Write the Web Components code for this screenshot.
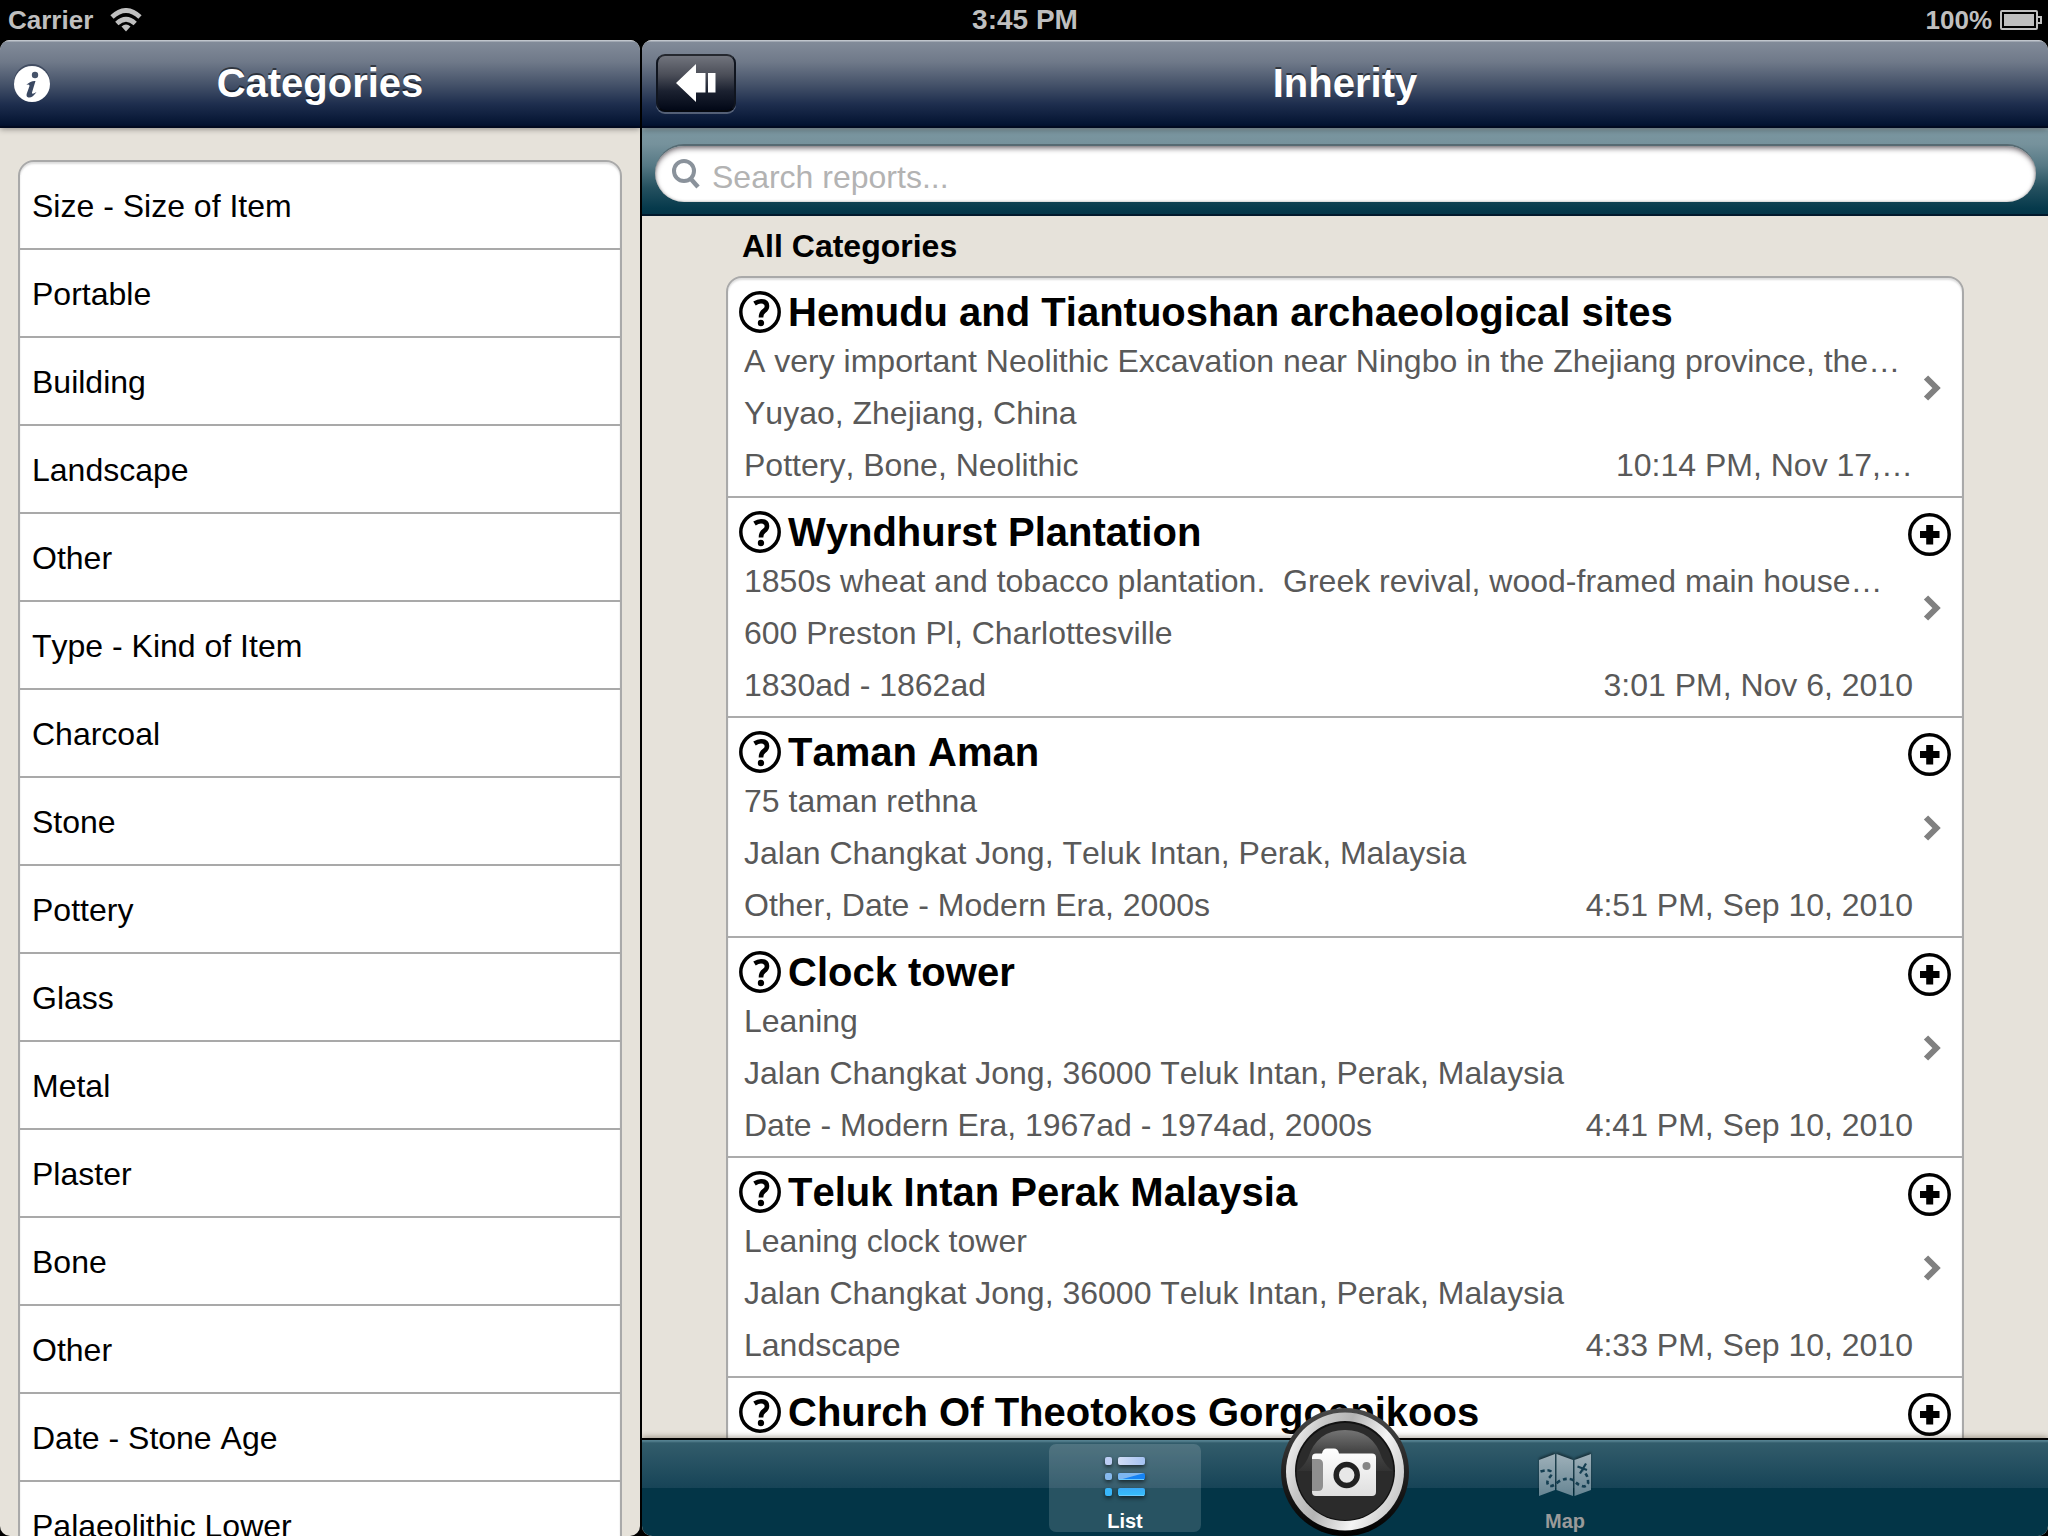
<!DOCTYPE html>
<html lang="en">
<head>
<meta charset="utf-8">
<meta name="viewport" content="width=device-width, initial-scale=1">
<title>Inherity</title>
<style>
  html, body { margin: 0; height: 100%; background: #000; }
  body { font-family: "Liberation Sans", Arial, sans-serif; font-kerning: none; overflow: hidden; }
</style>
</head>
<body>
<inherity-app>
  <status-bar slot="status">
    <span slot="carrier">Carrier</span>
    <span slot="time">3:45 PM</span>
    <span slot="battery">100%</span>
  </status-bar>

  <split-pane slot="master">
    <nav-bar slot="top"><info-button slot="left"></info-button>Categories</nav-bar>
    <category-list></category-list>
  </split-pane>

  <split-pane slot="detail">
    <nav-bar slot="top"><back-button slot="left"></back-button>Inherity</nav-bar>
    <search-bar slot="top"></search-bar>
    <report-list heading="All Categories">
      <report-item>
        Hemudu and Tiantuoshan archaeological sites
        <span slot="summary">A very important Neolithic Excavation near Ningbo in the Zhejiang province, the…</span>
        <span slot="place">Yuyao, Zhejiang, China</span>
        <span slot="tags">Pottery, Bone, Neolithic</span>
        <span slot="date">10:14 PM, Nov 17,…</span>
      </report-item>
      <report-item addable>
        Wyndhurst Plantation
        <span slot="summary">1850s wheat and tobacco plantation.&nbsp; Greek revival, wood-framed main house…</span>
        <span slot="place">600 Preston Pl, Charlottesville</span>
        <span slot="tags">1830ad - 1862ad</span>
        <span slot="date">3:01 PM, Nov 6, 2010</span>
      </report-item>
      <report-item addable>
        Taman Aman
        <span slot="summary">75 taman rethna</span>
        <span slot="place">Jalan Changkat Jong, Teluk Intan, Perak, Malaysia</span>
        <span slot="tags">Other, Date - Modern Era, 2000s</span>
        <span slot="date">4:51 PM, Sep 10, 2010</span>
      </report-item>
      <report-item addable>
        Clock tower
        <span slot="summary">Leaning</span>
        <span slot="place">Jalan Changkat Jong, 36000 Teluk Intan, Perak, Malaysia</span>
        <span slot="tags">Date - Modern Era, 1967ad - 1974ad, 2000s</span>
        <span slot="date">4:41 PM, Sep 10, 2010</span>
      </report-item>
      <report-item addable>
        Teluk Intan Perak Malaysia
        <span slot="summary">Leaning clock tower</span>
        <span slot="place">Jalan Changkat Jong, 36000 Teluk Intan, Perak, Malaysia</span>
        <span slot="tags">Landscape</span>
        <span slot="date">4:33 PM, Sep 10, 2010</span>
      </report-item>
      <report-item addable>
        Church Of Theotokos Gorgoepikoos
      </report-item>
    </report-list>
    <tab-bar slot="bottom">
      <tab-item selected>
        <svg slot="icon" width="52" height="52" viewBox="0 0 52 52" aria-hidden="true">
          <defs>
            <linearGradient id="top" x1="0" y1="0" x2="1" y2="0"><stop offset="0" stop-color="#d3def6"/><stop offset="1" stop-color="#a4c2f2"/></linearGradient>
            <linearGradient id="low" x1="0" y1="0" x2="0" y2="1"><stop offset="0" stop-color="#3aa9f6"/><stop offset="1" stop-color="#35c0fb"/></linearGradient>
          </defs>
          <g>
            <rect x="6" y="7" width="7" height="8" rx="2" fill="#bccdf3"/>
            <rect x="19" y="7" width="27" height="8" rx="2" fill="url(#top)"/>
            <rect x="6" y="23" width="7" height="7" rx="2" fill="#86b9ee"/>
            <rect x="19" y="23" width="27" height="7" rx="2" fill="#1583f3"/>
            <path d="M21 23h24.500L20 30q-1-1-1-2v-3q0-2 2-2z" fill="#7db6f0"/>
            <rect x="6" y="38" width="7" height="8" rx="2" fill="#38b6fa"/>
            <rect x="19" y="38" width="27" height="8" rx="2" fill="url(#low)"/>
            <path d="M20 45.500h25M20 29.500h25" stroke="#6ccbff" stroke-width="1"/>
          </g>
        </svg>
        List
      </tab-item>
      <camera-button></camera-button>
      <tab-item>
        <svg slot="icon" width="52" height="52" viewBox="0 0 52 52" aria-hidden="true">
          <defs><linearGradient id="paper" x1="0" y1="0" x2="0" y2="1"><stop offset="0" stop-color="#9eb0b9"/><stop offset="1" stop-color="#668593"/></linearGradient></defs>
          <path d="M0 10L16 4V40L0 46zM17.500 4L34 10V46L17.500 40zM35.500 10L52 4V40L35.500 46z" fill="url(#paper)"/>
          <path d="M1.500 21.500Q9 19 12 21.500Q14 24 10 28Q7 32 9.500 35.500Q13 37.500 19 32Q27 27 34 30Q40 36 45 36.500Q50 35 49 31Q49 25 44 21" fill="none" stroke="#153f52" stroke-width="2.600" stroke-dasharray="4 3"/>
          <path d="M38.500 16.500L48 20M47 13.500L41 23.500" stroke="#153f52" stroke-width="2.200"/>
        </svg>
        Map
      </tab-item>
    </tab-bar>
  </split-pane>
</inherity-app>

<script>
  // Registers an element whose shadow root is cloned from a template string.
  function component(name, markup, setup) {
    const template = document.createElement('template');
    template.innerHTML = markup;
    customElements.define(name, class extends HTMLElement {
      constructor() {
        super();
        this.attachShadow({ mode: 'open' }).append(template.content.cloneNode(true));
      }
      connectedCallback() { if (setup) setup(this, this.shadowRoot); }
    });
  }

  component('inherity-app', `
    <style>
      :host { display: flex; flex-direction: column; height: 100vh; background: #000; }
      main { flex: 1; min-height: 0; display: grid; grid-template-columns: 640px minmax(0, 1fr); gap: 2px; }
      ::slotted(split-pane) { min-height: 0; }
    </style>
    <slot name="status"></slot>
    <main><slot name="master"></slot><slot name="detail"></slot></main>`);

  component('status-bar', `
    <style>
      :host { display: grid; grid-template-columns: 1fr auto 1fr; align-items: center; height: 40px; padding: 0 6px 0 8px;
              color: #bfbfbf; font-size: 26px; font-weight: bold; line-height: 40px; }
      .left, .right { display: flex; align-items: center; }
      .left { gap: 17px; }
      .right { justify-content: flex-end; gap: 8px; }
      .time { font-size: 28px; }
    </style>
    <div class="left"><slot name="carrier"></slot>
      <svg width="32" height="24" viewBox="0 0 32 24" aria-hidden="true">
        <g fill="none" stroke="#bfbfbf" stroke-width="4.800"><path d="M2 9Q16 -4 30 9"/><path d="M6.800 15.500Q16 7 25.200 15.500"/></g>
        <path d="M11.500 18.500Q16 14.500 20.500 18.500L16 23.500z" fill="#bfbfbf"/>
      </svg></div>
    <div class="time"><slot name="time"></slot></div>
    <div class="right"><slot name="battery"></slot>
      <svg width="42" height="20" viewBox="0 0 42 20" aria-hidden="true">
        <rect x="1" y="1" width="36" height="18" rx="1" fill="none" stroke="#bfbfbf" stroke-width="2"/>
        <rect x="4" y="4" width="30" height="12" fill="#bfbfbf"/>
        <path d="M38 7h3v6h-3" fill="none" stroke="#bfbfbf" stroke-width="2"/>
      </svg></div>`);

  component('split-pane', `
    <style>
      :host { display: flex; flex-direction: column; border-radius: 10px; overflow: hidden; background: #e6e2da; }
      .content { flex: 1; min-height: 0; overflow: hidden; }
    </style>
    <slot name="top"></slot>
    <div class="content"><slot></slot></div>
    <slot name="bottom"></slot>`);

  component('nav-bar', `
    <style>
      :host { position: relative; z-index: 1; display: grid; grid-template-columns: 1fr auto 1fr; align-items: center;
              height: 88px; box-sizing: border-box; padding: 0 14px 2px; flex: none;
              background: linear-gradient(#c0c5cc 0 1px, #828b99 2px, #6f7989 22px, #46536a 44px, #1e2e4e 64px, #041432 84px, #03102d 86px, #010a20 86px);
              box-shadow: 0 1px 6px rgba(0, 0, 0, .4); }
      h1 { margin: 0; color: #fff; font-size: 40px; line-height: 48px; text-shadow: 0 -2px 0 rgba(0, 0, 0, .5); }
      .left { display: flex; }
    </style>
    <div class="left"><slot name="left"></slot></div>
    <h1><slot></slot></h1>`);

  component('info-button', `
    <style>
      :host { display: block; }
      button { display: block; padding: 0; border: 0; background: none; border-radius: 50%; }
      svg { display: block; }
    </style>
    <button type="button" aria-label="About">
      <svg width="36" height="38" viewBox="0 0 36 38" aria-hidden="true">
        <circle cx="18" cy="18" r="18" fill="#1c2740" opacity=".5"/>
        <circle cx="18" cy="20" r="18" fill="#fff"/>
        <circle cx="21" cy="11" r="3.200" fill="#46536a"/>
        <path d="M12.300 20.800Q17 16.500 21.500 17L18 28.500Q17.500 31 22.500 28Q18.500 34 14.500 33.500Q11.800 33 12.800 29.500L15.500 22Q15.800 19.800 12.300 20.800z" fill="#3a4862"/>
      </svg>
    </button>`);

  component('back-button', `
    <style>
      :host { display: block; }
      button { display: flex; align-items: center; justify-content: center; width: 80px; height: 58px; padding: 0;
               border: 2px solid; border-color: #25282f #10151f #05080f; border-radius: 9px;
               background: linear-gradient(#71747d, #4b4e58 35%, #1b2130 65%, #020817);
               box-shadow: 0 2px 0 rgba(255, 255, 255, .28); }
    </style>
    <button type="button" aria-label="Back">
      <svg width="40" height="38" viewBox="0 0 40 38" aria-hidden="true">
        <path d="M0 19L20 0V9H29.500V28.500H20V38zM32 9H39.500V28.500H32z" fill="#fff"/>
      </svg>
    </button>`);

  component('category-list', `
    <style>
      :host { display: block; padding: 32px 18px 0; }
      ul { list-style: none; margin: 0; padding: 0; border: 2px solid #a9a9a9; border-radius: 16px 16px 0 0; overflow: hidden;
           background: #fff; box-shadow: inset 0 2px 2px #ddd; }
      li { border-bottom: 2px solid #a9a9a9; }
      button { display: block; width: 100%; height: 86px; padding: 2px 12px 0; border: 0; background: none; color: #000;
               font: 32px/40px "Liberation Sans", Arial, sans-serif; font-kerning: none; text-align: left; }
    </style>
    <nav aria-label="Categories"><ul></ul></nav>`, (host, root) => {
    const names = ['Size - Size of Item', 'Portable', 'Building', 'Landscape', 'Other', 'Type - Kind of Item', 'Charcoal',
      'Stone', 'Pottery', 'Glass', 'Metal', 'Plaster', 'Bone', 'Other', 'Date - Stone Age', 'Palaeolithic Lower'];
    root.querySelector('ul').replaceChildren(...names.map(name => {
      const item = document.createElement('li');
      const button = document.createElement('button');
      button.type = 'button';
      button.textContent = name;
      item.append(button);
      return item;
    }));
  });

  component('search-bar', `
    <style>
      :host { display: block; flex: none; height: 88px; box-sizing: border-box; padding: 16px 12px 14px 13px;
              background: linear-gradient(#8fa3aa 0 1px, #7b96a0 3px, #76929c 16px, #557884 38px, #24505f 60px, #063a4c 80px, #043548 86px, #02192c 86px); }
      label { display: flex; align-items: center; height: 58px; box-sizing: border-box; padding: 0 17px; gap: 12px;
              border-radius: 29px; background: #fff; border-top: 2px solid #566a72;
              box-shadow: inset 0 3px 5px rgba(40, 30, 40, .5), inset 0 0 3px rgba(0, 0, 0, .3); }
      input { flex: 1; min-width: 0; height: 56px; box-sizing: border-box; padding: 6px 0 0; border: 0; outline: 0; background: none;
              font: 32px/40px "Liberation Sans", Arial, sans-serif; font-kerning: none; color: #000; }
      input::placeholder { color: #b3b3b3; opacity: 1; }
    </style>
    <label>
      <svg width="28" height="30" viewBox="0 0 28 30" aria-hidden="true">
        <circle cx="12" cy="12" r="10" fill="none" stroke="#8a929b" stroke-width="4"/>
        <path d="M18 19L26 28" stroke="#8a929b" stroke-width="4.500"/>
      </svg>
      <input type="search" placeholder="Search reports..." aria-label="Search reports">
    </label>`);

  component('report-list', `
    <style>
      :host { display: block; padding: 0 84px; }
      h2 { margin: 0; padding: 0 16px; font-size: 32px; line-height: 60px; color: #000; }
      .card { border: 2px solid #a9a9a9; border-radius: 16px 16px 0 0; background: #fff; overflow: hidden; box-shadow: inset 0 2px 2px #ddd; }
    </style>
    <h2></h2>
    <div class="card"><slot></slot></div>`, (host, root) => {
    root.querySelector('h2').textContent = host.getAttribute('heading');
  });

  component('report-item', `
    <style>
      :host { display: grid; grid-template-columns: minmax(0, 1fr) 38px; padding: 9px 11px 7px; border-bottom: 2px solid #ababab;
              color: #595959; font-size: 32px; line-height: 48px; white-space: nowrap; }
      h3 { display: flex; align-items: center; gap: 7px; margin: 0; font-size: 40px; line-height: 50px; color: #000; }
      h3 svg { flex: none; }
      a { color: inherit; text-decoration: none; }
      .lines { display: grid; gap: 4px; padding-left: 5px; }
      .lines > div { min-height: 48px; overflow: hidden; text-overflow: ellipsis; }
      .lines > .last { display: flex; justify-content: space-between; gap: 20px; }
      .side { display: grid; grid-template-columns: 38px; }
      .side > * { grid-area: 1 / 1; }
      .add { align-self: start; justify-self: end; margin: 6px 0 0; padding: 0; border: 0; background: none; }
      .add svg { display: block; }
      .chevron { align-self: center; justify-self: center; }
      :host(:not([addable])) .add { display: none; }
    </style>
    <div>
      <h3>
        <svg width="42" height="42" viewBox="0 0 42 42" aria-hidden="true">
          <circle cx="21" cy="21" r="19.200" fill="none" stroke="#000" stroke-width="3.500"/>
          <path d="M15.500 12.500Q19 10.300 22 10.300Q28 10.300 28 15Q28 18 25 20Q22 22 22 26.500" fill="none" stroke="#000" stroke-width="4.600"/>
          <circle cx="22" cy="32" r="3.200"/>
        </svg>
        <a href="#"><slot></slot></a>
      </h3>
      <div class="lines">
        <div><slot name="summary"></slot></div>
        <div><slot name="place"></slot></div>
        <div class="last"><slot name="tags"></slot><slot name="date"></slot></div>
      </div>
    </div>
    <div class="side">
      <button class="add" type="button" aria-label="Add">
        <svg width="43" height="43" viewBox="0 0 43 43" aria-hidden="true">
          <circle cx="21.500" cy="21.500" r="19.700" fill="none" stroke="#000" stroke-width="3.500"/>
          <path d="M12 21.500H31.500M21.700 12V31.500" stroke="#000" stroke-width="7"/>
        </svg>
      </button>
      <svg class="chevron" width="18" height="26" viewBox="0 0 18 26" aria-hidden="true">
        <path d="M3 2.500L13.500 13L3 23.500" fill="none" stroke="#808080" stroke-width="6"/>
      </svg>
    </div>`);

  component('tab-bar', `
    <style>
      :host { position: relative; z-index: 1; display: flex; justify-content: center; align-items: flex-end; gap: 80px; flex: none;
              height: 98px; box-sizing: border-box; border-top: 2px solid #000;
              background: linear-gradient(#54808f 0 1px, #325c6b 3px, #174457 48px, #033547 48px);
              box-shadow: 0 -1px 6px rgba(60, 45, 25, .45); }
    </style>
    <slot></slot>`);

  component('tab-item', `
    <style>
      :host { display: block; padding-bottom: 4px; }
      button { display: flex; flex-direction: column; align-items: center; justify-content: space-between;
               width: 152px; height: 88px; padding: 6px 0 0; border: 0; border-radius: 7px; background: none; color: #9a9a9a;
               font: bold 20px/22px "Liberation Sans", Arial, sans-serif; }
      :host([selected]) button { background: rgba(255, 255, 255, .15); color: #fff; }
      ::slotted(svg) { display: block; filter: drop-shadow(0 2px 2px rgba(0, 0, 0, .6)); }
      :host(:not([selected])) ::slotted(svg) { filter: drop-shadow(0 -2px 1px rgba(0, 0, 0, .4)); }
    </style>
    <button type="button"><slot name="icon"></slot><span><slot></slot></span></button>`);

  component('camera-button', `
    <style>
      :host { display: block; }
      button { display: block; padding: 0; border: 0; background: none; border-radius: 50%; }
      svg { display: block; }
    </style>
    <button type="button" aria-label="Take photo">
      <svg width="128" height="128" viewBox="0 0 128 128" aria-hidden="true">
        <defs>
          <linearGradient id="rim" x1="0" y1="0" x2="0" y2="1"><stop offset="0" stop-color="#4a4a4a"/><stop offset=".5" stop-color="#222"/><stop offset="1" stop-color="#000"/></linearGradient>
          <linearGradient id="ring" x1="0" y1=".3" x2="1" y2=".7"><stop offset="0" stop-color="#f0f0f0"/><stop offset=".2" stop-color="#c8c8c8"/><stop offset=".4" stop-color="#b4b4b4"/><stop offset=".7" stop-color="#f4f4f4"/><stop offset="1" stop-color="#c4c4c4"/></linearGradient>
          <linearGradient id="gloss" x1="0" y1="0" x2="0" y2="1"><stop offset="0" stop-color="#747474"/><stop offset=".5" stop-color="#474747"/><stop offset="1" stop-color="#323232"/></linearGradient>
          <linearGradient id="body" x1="0" y1="0" x2="0" y2="1"><stop offset="0" stop-color="#fff"/><stop offset="1" stop-color="#dedede"/></linearGradient>
        </defs>
        <circle cx="64" cy="64" r="64" fill="url(#rim)"/>
        <circle cx="64" cy="63.500" r="59" fill="url(#ring)"/>
        <circle cx="64" cy="63" r="50" fill="#111"/>
        <circle cx="64" cy="63.500" r="48.500" fill="#2b2b2b"/>
        <path d="M16 63Q22 60 27 50Q36 22 64 22Q92 22 101 50Q106 60 112 63z" fill="url(#gloss)"/>
        <path d="M35 45.500H41Q42 40.500 46 40.500H53Q57 40.500 58 45.500H91Q95 45.500 95 49.500V84Q95 88 91 88H35Q31 88 31 84V49.500Q31 45.500 35 45.500z" fill="url(#body)"/>
        <path d="M31 51H37Q42 51 42 56V78Q42 83 37 83H31z" fill="#8f8f8f"/>
        <circle cx="65.700" cy="67" r="10.500" fill="#e8e8e8" stroke="#222" stroke-width="5.500"/>
        <circle cx="85.500" cy="58" r="4" fill="#858585"/>
      </svg>
    </button>`);
</script>
</body>
</html>
